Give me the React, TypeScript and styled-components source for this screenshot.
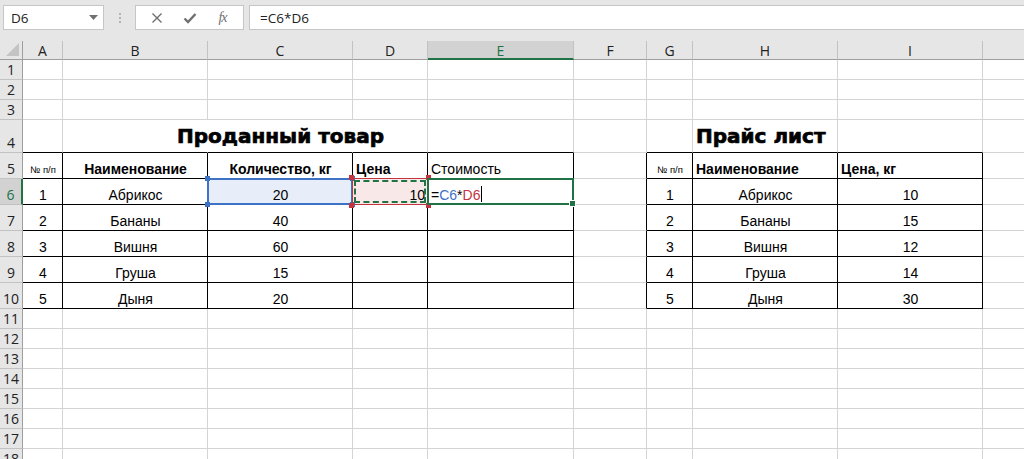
import React from "react";
import styled, { createGlobalStyle } from "styled-components";

const GlobalStyle = createGlobalStyle`
  html, body {
    margin: 0;
    padding: 0;
    background: #ffffff;
    overflow: hidden;
  }
`;

const BLUE = "#3e72c6";
const RED = "#c3343e";
const GREEN = "#217346";

const Window = styled.div`
  width: 1024px;
  height: 459px;
  overflow: hidden;
  display: flex;
  flex-direction: column;
  font-family: "Liberation Sans", Arial, sans-serif;
  color: #000;
`;

// верхняя панель со строкой формул
const FormulaBar = styled.div`
  height: 41px;
  flex: none;
  background: #e6e6e6;
  display: flex;
  align-items: flex-start;
  padding: 5px 0 0 3px;
  box-sizing: border-box;
`;
const NameBox = styled.div`
  width: 101px;
  height: 25px;
  box-sizing: border-box;
  background: #fff;
  border: 1px solid #c6c6c6;
  display: flex;
  align-items: center;
  justify-content: space-between;
  padding: 0 5px 0 7px;
  font-family: "Open Sans", "Noto Sans", sans-serif;
  font-size: 13.5px;
  color: #222;
`;
const Grip = styled.div`
  width: 31px;
  height: 25px;
  display: flex;
  flex-direction: column;
  align-items: center;
  justify-content: center;
  gap: 2px;
  span {
    width: 2px;
    height: 2px;
    background: #b4b4b4;
  }
`;
const ButtonGroup = styled.div`
  width: 109px;
  height: 25px;
  box-sizing: border-box;
  background: #fff;
  border: 1px solid #c6c6c6;
  display: flex;
  align-items: center;
  justify-content: space-around;
  padding: 0 4px;
`;
const IconBtn = styled.div`
  width: 22px;
  height: 22px;
  display: flex;
  align-items: center;
  justify-content: center;
  color: #6f6f6f;
`;
const Fx = styled.span`
  font-family: "Liberation Serif", "DejaVu Serif", serif;
  font-style: italic;
  font-size: 14px;
  color: #6f6f6f;
  letter-spacing: -1px;
`;
const FormulaInput = styled.div`
  flex: 1;
  height: 25px;
  margin-left: 5px;
  box-sizing: border-box;
  background: #fff;
  border: 1px solid #c6c6c6;
  border-right: none;
  display: flex;
  align-items: center;
  padding-left: 10px;
  font-family: "Open Sans", "Noto Sans", sans-serif;
  font-size: 13.5px;
  color: #222;
`;

// лист
const Sheet = styled.div<{ $cols: string; $rows: string }>`
  display: grid;
  grid-template-columns: ${(p) => p.$cols};
  grid-template-rows: ${(p) => p.$rows};
  background: #fff;
`;
const Corner = styled.div`
  background: #e6e6e6;
  border-right: 1px solid #9e9e9e;
  border-bottom: 1px solid #9e9e9e;
  box-sizing: border-box;
  display: flex;
  align-items: flex-end;
  justify-content: flex-end;
  padding: 0 3px 3px 0;
`;
const ColHeader = styled.div<{ $active?: boolean }>`
  background: ${(p) => (p.$active ? "#d2d2d2" : "#e6e6e6")};
  color: ${(p) => (p.$active ? GREEN : "#222")};
  border-right: 1px solid #c2c2c2;
  border-bottom: ${(p) => (p.$active ? `2px solid ${GREEN}` : "1px solid #9e9e9e")};
  box-sizing: border-box;
  display: flex;
  align-items: center;
  justify-content: center;
  padding-top: 1px;
  font-family: "Open Sans", "Noto Sans", sans-serif;
  font-size: 14px;
`;
const RowHeader = styled.div<{ $active?: boolean }>`
  background: ${(p) => (p.$active ? "#d2d2d2" : "#e6e6e6")};
  color: ${(p) => (p.$active ? GREEN : "#222")};
  border-right: ${(p) => (p.$active ? `2px solid ${GREEN}` : "1px solid #9e9e9e")};
  border-bottom: 1px solid #c2c2c2;
  box-sizing: border-box;
  display: flex;
  align-items: flex-end;
  justify-content: center;
  padding-bottom: 0;
  font-family: "Open Sans", "Noto Sans", sans-serif;
  font-size: 14px;
  line-height: 19px;
`;

type Edge = "grid" | "black" | "none";
const edge = (e: Edge) =>
  e === "black" ? "1px solid #000" : e === "none" ? "1px solid transparent" : "1px solid #d4d4d4";

const Cell = styled.div<{
  $align: "left" | "center" | "right";
  $bold?: boolean;
  $small?: boolean;
  $title?: boolean;
  $right: Edge;
  $bottom: Edge;
  $fill?: string;
}>`
  position: relative;
  box-sizing: border-box;
  border-right: ${(p) => edge(p.$right)};
  border-bottom: ${(p) => edge(p.$bottom)};
  background: ${(p) => p.$fill || "transparent"};
  display: flex;
  align-items: flex-end;
  justify-content: ${(p) => (p.$align === "left" ? "flex-start" : p.$align === "right" ? "flex-end" : "center")};
  padding: 0 2px ${(p) => (p.$title ? "6px" : p.$small ? "4px" : "2px")} 3px;
  white-space: nowrap;
  overflow: visible;
  z-index: ${(p) => (p.$title ? 2 : "auto")};
  font-family: ${(p) => (p.$title ? `"DejaVu Sans", Verdana, sans-serif` : `"Liberation Sans", Arial, sans-serif`)};
  font-size: ${(p) => (p.$title ? "20px" : p.$small ? "9.5px" : "14px")};
  font-weight: ${(p) => (p.$bold || p.$title ? 700 : 400)};
  -webkit-text-stroke: ${(p) => (p.$title ? "0.7px #000" : "0")};
  line-height: 1;
`;

// рамки ссылок формулы поверх ячеек
const RefBox = styled.div<{ $color: string; $width: number; $dashed?: boolean; $inset: number }>`
  position: absolute;
  inset: ${(p) => p.$inset}px;
  border: ${(p) => `${p.$width}px ${p.$dashed ? "dashed" : "solid"} ${p.$color}`};
  pointer-events: none;
  z-index: 3;
`;
const Handle = styled.span<{ $color: string; $x: "l" | "r"; $y: "t" | "b" }>`
  position: absolute;
  width: 5px;
  height: 5px;
  background: ${(p) => p.$color};
  ${(p) => (p.$x === "l" ? "left: -4px;" : "right: -4px;")}
  ${(p) => (p.$y === "t" ? "top: -4px;" : "bottom: -4px;")}
`;
const FillHandle = styled.span`
  position: absolute;
  width: 5px;
  height: 5px;
  right: -4px;
  bottom: -4px;
  background: ${GREEN};
  border: 1px solid #fff;
`;
const Ref = styled.span<{ $color?: string }>`
  color: ${(p) => p.$color || "#000"};
`;
const Caret = styled.span`
  display: inline-block;
  width: 1px;
  height: 16px;
  background: #000;
  margin-left: 1px;
  vertical-align: bottom;
`;

const columns = [
  { key: "A", w: 40 },
  { key: "B", w: 145 },
  { key: "C", w: 145 },
  { key: "D", w: 75 },
  { key: "E", w: 146 },
  { key: "F", w: 73 },
  { key: "G", w: 46 },
  { key: "H", w: 145 },
  { key: "I", w: 145 },
  { key: "J", w: 60 },
];
const rowHeights = [20, 20, 20, 33, 26, 26, 26, 26, 26, 26, 20, 20, 20, 20, 20, 20, 20, 20];

type Spec = {
  text?: React.ReactNode;
  align?: "left" | "center" | "right";
  bold?: boolean;
  small?: boolean;
  title?: boolean;
};

const cells: Record<string, Spec> = {
  C4: { text: "Проданный товар", title: true, align: "center" },
  H4: { text: "Прайс лист", title: true, align: "left" },
  A5: { text: "№ п/п", small: true, align: "center" },
  B5: { text: "Наименование", bold: true, align: "center" },
  C5: { text: "Количество, кг", bold: true, align: "center" },
  D5: { text: "Цена", bold: true, align: "left" },
  E5: { text: "Стоимость", align: "left" },
  G5: { text: "№ п/п", small: true, align: "center" },
  H5: { text: "Наименование", bold: true, align: "left" },
  I5: { text: "Цена, кг", bold: true, align: "left" },
  D6: { text: "10", align: "right" },
  E6: {
    align: "left",
    text: (
      <>
        <Ref>=</Ref>
        <Ref $color={BLUE}>C6</Ref>
        <Ref>*</Ref>
        <Ref $color={RED}>D6</Ref>
        <Caret />
      </>
    ),
  },
};

const sold = [
  ["1", "Абрикос", "20"],
  ["2", "Бананы", "40"],
  ["3", "Вишня", "60"],
  ["4", "Груша", "15"],
  ["5", "Дыня", "20"],
];
const prices = [
  ["1", "Абрикос", "10"],
  ["2", "Бананы", "15"],
  ["3", "Вишня", "12"],
  ["4", "Груша", "14"],
  ["5", "Дыня", "30"],
];
sold.forEach((r, i) => {
  const row = i + 6;
  cells[`A${row}`] = { text: r[0], align: "center" };
  cells[`B${row}`] = { text: r[1], align: "center" };
  cells[`C${row}`] = { text: r[2], align: "center" };
});
prices.forEach((r, i) => {
  const row = i + 6;
  cells[`G${row}`] = { text: r[0], align: "center" };
  cells[`H${row}`] = { text: r[1], align: "center" };
  cells[`I${row}`] = { text: r[2], align: "center" };
});

const inTable = (c: number, r: number) =>
  r >= 5 && r <= 10 && ((c >= 0 && c <= 4) || (c >= 6 && c <= 8));

function rightEdge(c: number, r: number): Edge {
  if (r === 4 && (c === 1 || c === 2)) return "none"; // заголовок перекрывает сетку
  if (inTable(c, r) || inTable(c + 1, r)) return "black";
  return "grid";
}
function bottomEdge(c: number, r: number): Edge {
  if (inTable(c, r) || inTable(c, r + 1)) return "black";
  return "grid";
}

function CellOverlay({ id }: { id: string }) {
  if (id === "C6")
    return (
      <RefBox $color={BLUE} $width={2} $inset={-1}>
        <Handle $color={BLUE} $x="l" $y="t" />
        <Handle $color={BLUE} $x="r" $y="t" />
        <Handle $color={BLUE} $x="l" $y="b" />
        <Handle $color={BLUE} $x="r" $y="b" />
      </RefBox>
    );
  if (id === "D6")
    return (
      <>
        <RefBox $color={RED} $width={1} $inset={-1}>
          <Handle $color={RED} $x="l" $y="t" />
          <Handle $color={RED} $x="r" $y="t" />
          <Handle $color={RED} $x="l" $y="b" />
          <Handle $color={RED} $x="r" $y="b" />
        </RefBox>
        <RefBox $color={GREEN} $width={2} $dashed $inset={1} />
      </>
    );
  if (id === "E6")
    return (
      <RefBox $color={GREEN} $width={2} $inset={-1}>
        <FillHandle />
      </RefBox>
    );
  return null;
}

const fills: Record<string, string> = { C6: "#e8eef9", D6: "#f9e8e8" };

function CloseIcon() {
  return (
    <svg width="12" height="12" viewBox="0 0 12 12">
      <path d="M1.5 1.5 L10.5 10.5 M10.5 1.5 L1.5 10.5" stroke="#6f6f6f" strokeWidth="1.4" fill="none" />
    </svg>
  );
}
function CheckIcon() {
  return (
    <svg width="14" height="12" viewBox="0 0 14 12">
      <path d="M1.5 6.5 L5 10 L12.5 2" stroke="#6f6f6f" strokeWidth="2.4" fill="none" />
    </svg>
  );
}
function DropIcon() {
  return (
    <svg width="9" height="5" viewBox="0 0 9 5">
      <path d="M0 0 L9 0 L4.5 5 Z" fill="#707070" />
    </svg>
  );
}
function CornerTriangle() {
  return (
    <svg width="13" height="13" viewBox="0 0 13 13">
      <path d="M13 0 L13 13 L0 13 Z" fill="#c4c4c4" />
    </svg>
  );
}

export default function App() {
  const cols = `23px ${columns.map((c) => `${c.w}px`).join(" ")}`;
  const rows = `19px ${rowHeights.map((h) => `${h}px`).join(" ")}`;

  return (
    <Window>
      <GlobalStyle />
      <FormulaBar>
        <NameBox>
          <span>D6</span>
          <DropIcon />
        </NameBox>
        <Grip>
          <span />
          <span />
          <span />
        </Grip>
        <ButtonGroup>
          <IconBtn>
            <CloseIcon />
          </IconBtn>
          <IconBtn>
            <CheckIcon />
          </IconBtn>
          <IconBtn>
            <Fx>fx</Fx>
          </IconBtn>
        </ButtonGroup>
        <FormulaInput>=C6*D6</FormulaInput>
      </FormulaBar>

      <Sheet $cols={cols} $rows={rows}>
        <Corner>
          <CornerTriangle />
        </Corner>
        {columns.map((c) => (
          <ColHeader key={c.key} $active={c.key === "E"}>
            {c.key === "J" ? "" : c.key}
          </ColHeader>
        ))}
        {rowHeights.map((_, ri) => {
          const r = ri + 1;
          return (
            <React.Fragment key={r}>
              <RowHeader $active={r === 6}>{r}</RowHeader>
              {columns.map((c, ci) => {
                const id = `${c.key}${r}`;
                const spec = cells[id] || {};
                return (
                  <Cell
                    key={id}
                    $align={spec.align || "left"}
                    $bold={spec.bold}
                    $small={spec.small}
                    $title={spec.title}
                    $right={rightEdge(ci, r)}
                    $bottom={bottomEdge(ci, r)}
                    $fill={fills[id]}
                  >
                    {spec.text}
                    <CellOverlay id={id} />
                  </Cell>
                );
              })}
            </React.Fragment>
          );
        })}
      </Sheet>
    </Window>
  );
}
